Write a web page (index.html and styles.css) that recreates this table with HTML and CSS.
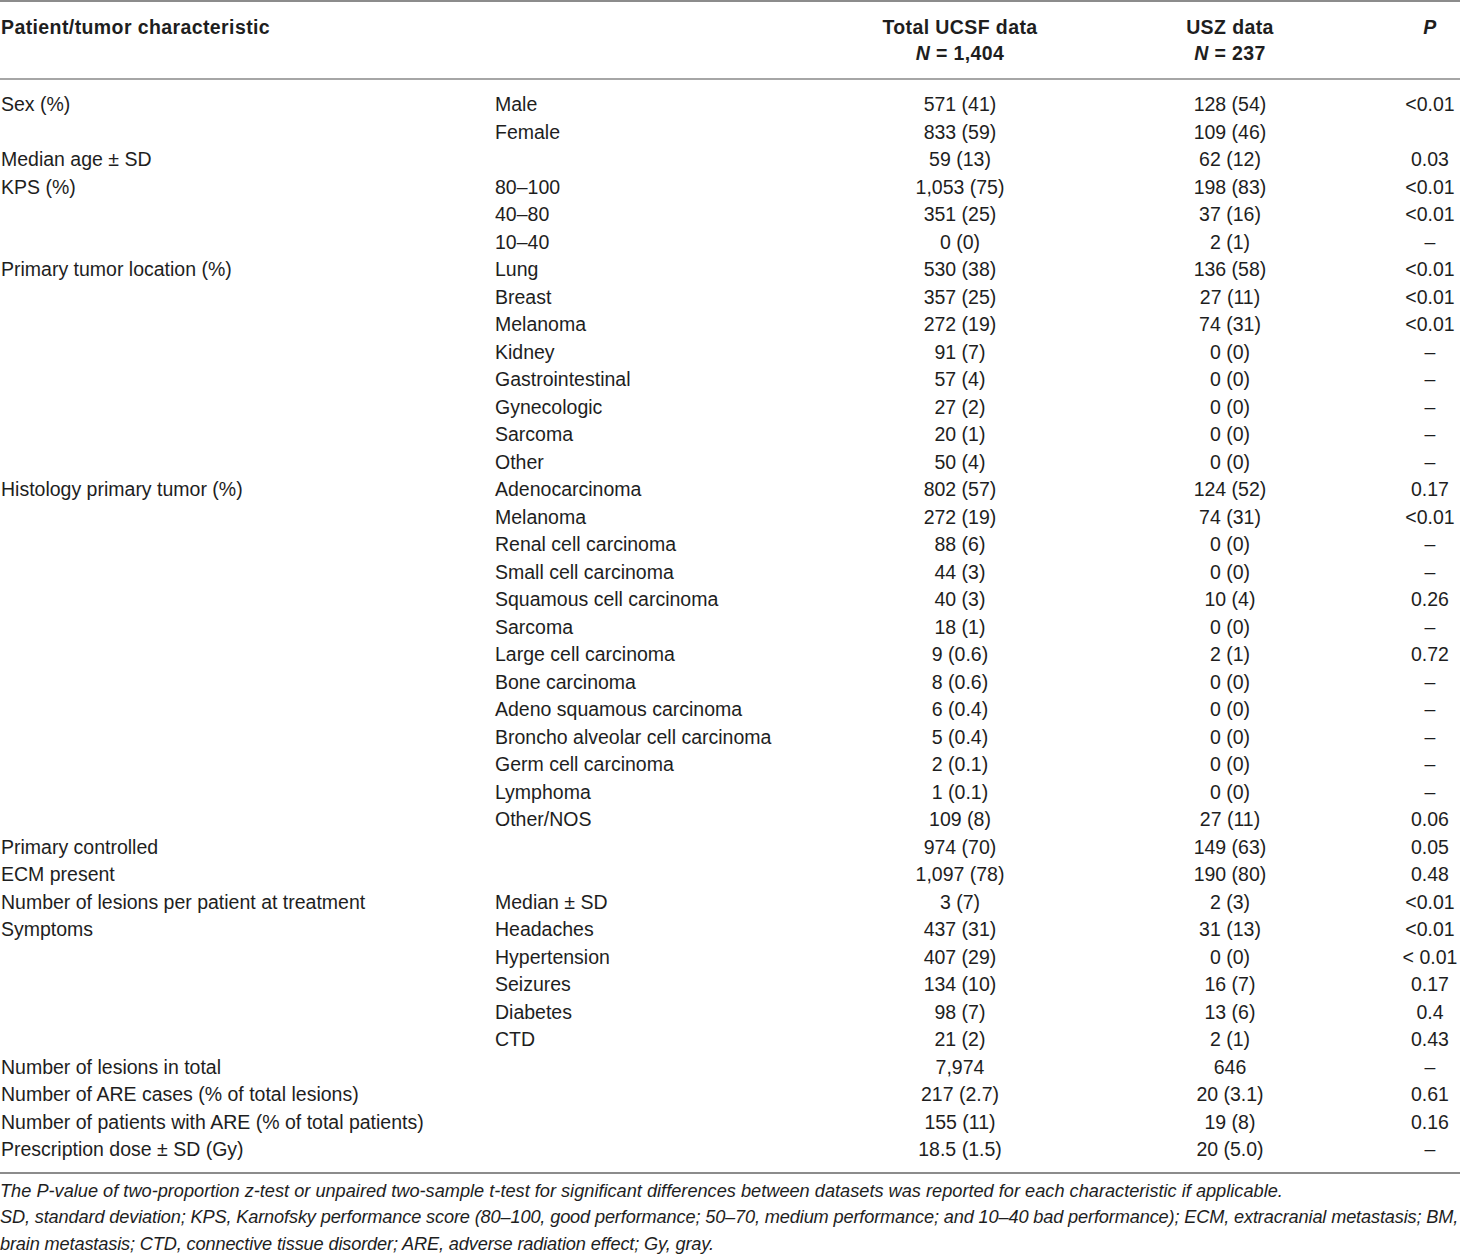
FILE: index.html
```html
<!DOCTYPE html>
<html lang="en">
<head>
<meta charset="utf-8">
<title>Patient and tumor characteristics</title>
<link rel="stylesheet" href="styles.css">
</head>
<body>
<table class="data">
  <colgroup>
    <col class="c1"><col class="c2"><col class="c3"><col class="c4"><col class="c5">
  </colgroup>
  <thead>
    <tr>
      <th class="lbl">Patient/tumor characteristic</th>
      <th></th>
      <th class="num">Total UCSF data<br><i>N</i> = 1,404</th>
      <th class="num n4">USZ data<br><i>N</i> = 237</th>
      <th class="num"><i>P</i></th>
    </tr>
  </thead>
  <tbody>
    <tr class="first"><td>Sex (%)</td><td>Male</td><td class="num">571 (41)</td><td class="num n4">128 (54)</td><td class="num">&lt;0.01</td></tr>
    <tr><td></td><td>Female</td><td class="num">833 (59)</td><td class="num n4">109 (46)</td><td class="num"></td></tr>
    <tr><td>Median age ± SD</td><td></td><td class="num">59 (13)</td><td class="num n4">62 (12)</td><td class="num">0.03</td></tr>
    <tr><td>KPS (%)</td><td>80–100</td><td class="num">1,053 (75)</td><td class="num n4">198 (83)</td><td class="num">&lt;0.01</td></tr>
    <tr><td></td><td>40–80</td><td class="num">351 (25)</td><td class="num n4">37 (16)</td><td class="num">&lt;0.01</td></tr>
    <tr><td></td><td>10–40</td><td class="num">0 (0)</td><td class="num n4">2 (1)</td><td class="num">–</td></tr>
    <tr><td>Primary tumor location (%)</td><td>Lung</td><td class="num">530 (38)</td><td class="num n4">136 (58)</td><td class="num">&lt;0.01</td></tr>
    <tr><td></td><td>Breast</td><td class="num">357 (25)</td><td class="num n4">27 (11)</td><td class="num">&lt;0.01</td></tr>
    <tr><td></td><td>Melanoma</td><td class="num">272 (19)</td><td class="num n4">74 (31)</td><td class="num">&lt;0.01</td></tr>
    <tr><td></td><td>Kidney</td><td class="num">91 (7)</td><td class="num n4">0 (0)</td><td class="num">–</td></tr>
    <tr><td></td><td>Gastrointestinal</td><td class="num">57 (4)</td><td class="num n4">0 (0)</td><td class="num">–</td></tr>
    <tr><td></td><td>Gynecologic</td><td class="num">27 (2)</td><td class="num n4">0 (0)</td><td class="num">–</td></tr>
    <tr><td></td><td>Sarcoma</td><td class="num">20 (1)</td><td class="num n4">0 (0)</td><td class="num">–</td></tr>
    <tr><td></td><td>Other</td><td class="num">50 (4)</td><td class="num n4">0 (0)</td><td class="num">–</td></tr>
    <tr><td>Histology primary tumor (%)</td><td>Adenocarcinoma</td><td class="num">802 (57)</td><td class="num n4">124 (52)</td><td class="num">0.17</td></tr>
    <tr><td></td><td>Melanoma</td><td class="num">272 (19)</td><td class="num n4">74 (31)</td><td class="num">&lt;0.01</td></tr>
    <tr><td></td><td>Renal cell carcinoma</td><td class="num">88 (6)</td><td class="num n4">0 (0)</td><td class="num">–</td></tr>
    <tr><td></td><td>Small cell carcinoma</td><td class="num">44 (3)</td><td class="num n4">0 (0)</td><td class="num">–</td></tr>
    <tr><td></td><td>Squamous cell carcinoma</td><td class="num">40 (3)</td><td class="num n4">10 (4)</td><td class="num">0.26</td></tr>
    <tr><td></td><td>Sarcoma</td><td class="num">18 (1)</td><td class="num n4">0 (0)</td><td class="num">–</td></tr>
    <tr><td></td><td>Large cell carcinoma</td><td class="num">9 (0.6)</td><td class="num n4">2 (1)</td><td class="num">0.72</td></tr>
    <tr><td></td><td>Bone carcinoma</td><td class="num">8 (0.6)</td><td class="num n4">0 (0)</td><td class="num">–</td></tr>
    <tr><td></td><td>Adeno squamous carcinoma</td><td class="num">6 (0.4)</td><td class="num n4">0 (0)</td><td class="num">–</td></tr>
    <tr><td></td><td>Broncho alveolar cell carcinoma</td><td class="num">5 (0.4)</td><td class="num n4">0 (0)</td><td class="num">–</td></tr>
    <tr><td></td><td>Germ cell carcinoma</td><td class="num">2 (0.1)</td><td class="num n4">0 (0)</td><td class="num">–</td></tr>
    <tr><td></td><td>Lymphoma</td><td class="num">1 (0.1)</td><td class="num n4">0 (0)</td><td class="num">–</td></tr>
    <tr><td></td><td>Other/NOS</td><td class="num">109 (8)</td><td class="num n4">27 (11)</td><td class="num">0.06</td></tr>
    <tr><td>Primary controlled</td><td></td><td class="num">974 (70)</td><td class="num n4">149 (63)</td><td class="num">0.05</td></tr>
    <tr><td>ECM present</td><td></td><td class="num">1,097 (78)</td><td class="num n4">190 (80)</td><td class="num">0.48</td></tr>
    <tr><td>Number of lesions per patient at treatment</td><td>Median ± SD</td><td class="num">3 (7)</td><td class="num n4">2 (3)</td><td class="num">&lt;0.01</td></tr>
    <tr><td>Symptoms</td><td>Headaches</td><td class="num">437 (31)</td><td class="num n4">31 (13)</td><td class="num">&lt;0.01</td></tr>
    <tr><td></td><td>Hypertension</td><td class="num">407 (29)</td><td class="num n4">0 (0)</td><td class="num">&lt; 0.01</td></tr>
    <tr><td></td><td>Seizures</td><td class="num">134 (10)</td><td class="num n4">16 (7)</td><td class="num">0.17</td></tr>
    <tr><td></td><td>Diabetes</td><td class="num">98 (7)</td><td class="num n4">13 (6)</td><td class="num">0.4</td></tr>
    <tr><td></td><td>CTD</td><td class="num">21 (2)</td><td class="num n4">2 (1)</td><td class="num">0.43</td></tr>
    <tr><td>Number of lesions in total</td><td></td><td class="num">7,974</td><td class="num n4">646</td><td class="num">–</td></tr>
    <tr><td>Number of ARE cases (% of total lesions)</td><td></td><td class="num">217 (2.7)</td><td class="num n4">20 (3.1)</td><td class="num">0.61</td></tr>
    <tr><td>Number of patients with ARE (% of total patients)</td><td></td><td class="num">155 (11)</td><td class="num n4">19 (8)</td><td class="num">0.16</td></tr>
    <tr class="last"><td>Prescription dose ± SD (Gy)</td><td></td><td class="num">18.5 (1.5)</td><td class="num n4">20 (5.0)</td><td class="num">–</td></tr>
  </tbody>
</table>
<div class="notes">
  <p class="note-p">The P-value of two-proportion z-test or unpaired two-sample t-test for significant differences between datasets was reported for each characteristic if applicable.</p>
  <p class="note-abbr">SD, standard deviation; KPS, Karnofsky performance score (80–100, good performance; 50–70, medium performance; and 10–40 bad performance); ECM, extracranial metastasis; BM, brain metastasis; CTD, connective tissue disorder; ARE, adverse radiation effect; Gy, gray.</p>
</div>
</body>
</html>
```

FILE: styles.css
```css
html, body {
  margin: 0;
  padding: 0;
  background: #ffffff;
}

body {
  width: 1460px;
  font-family: "Liberation Sans", Arial, sans-serif;
  font-size: 19.5px;
  color: #1e1e1e;
}

.data {
  width: 1460px;
  border-collapse: collapse;
  table-layout: fixed;
  border-top: 2px solid #8c8c8c;
  border-bottom: 2px solid #8c8c8c;
}

.c1 { width: 495px; }
.c2 { width: 345px; }
.c3 { width: 240px; }
.c4 { width: 320px; }
.c5 { width: 60px; }

.data th,
.data td {
  padding: 0 0 0 1px;
  text-align: left;
  vertical-align: middle;
  white-space: nowrap;
  height: 27.5px;
  line-height: 27.5px;
}

.data td:nth-child(2) {
  padding-left: 0;
}

.data thead th {
  font-weight: bold;
  letter-spacing: 0.4px;
  line-height: 26px;
  padding-top: 12px;
  padding-bottom: 12px;
  vertical-align: top;
  border-bottom: 2px solid #a6a6a6;
}

.data .num {
  text-align: center;
  padding-left: 0;
}

.data .n4 {
  padding-right: 20px;
}

.data tbody tr.first td {
  padding-top: 11px;
}

.data tbody tr.last td {
  padding-bottom: 8px;
}

.notes {
  padding-top: 4px;
  font-style: italic;
  font-size: 18.2px;
  line-height: 26.5px;
}

.notes p {
  margin: 0;
}

.notes .note-abbr {
  letter-spacing: -0.15px;
}
```
